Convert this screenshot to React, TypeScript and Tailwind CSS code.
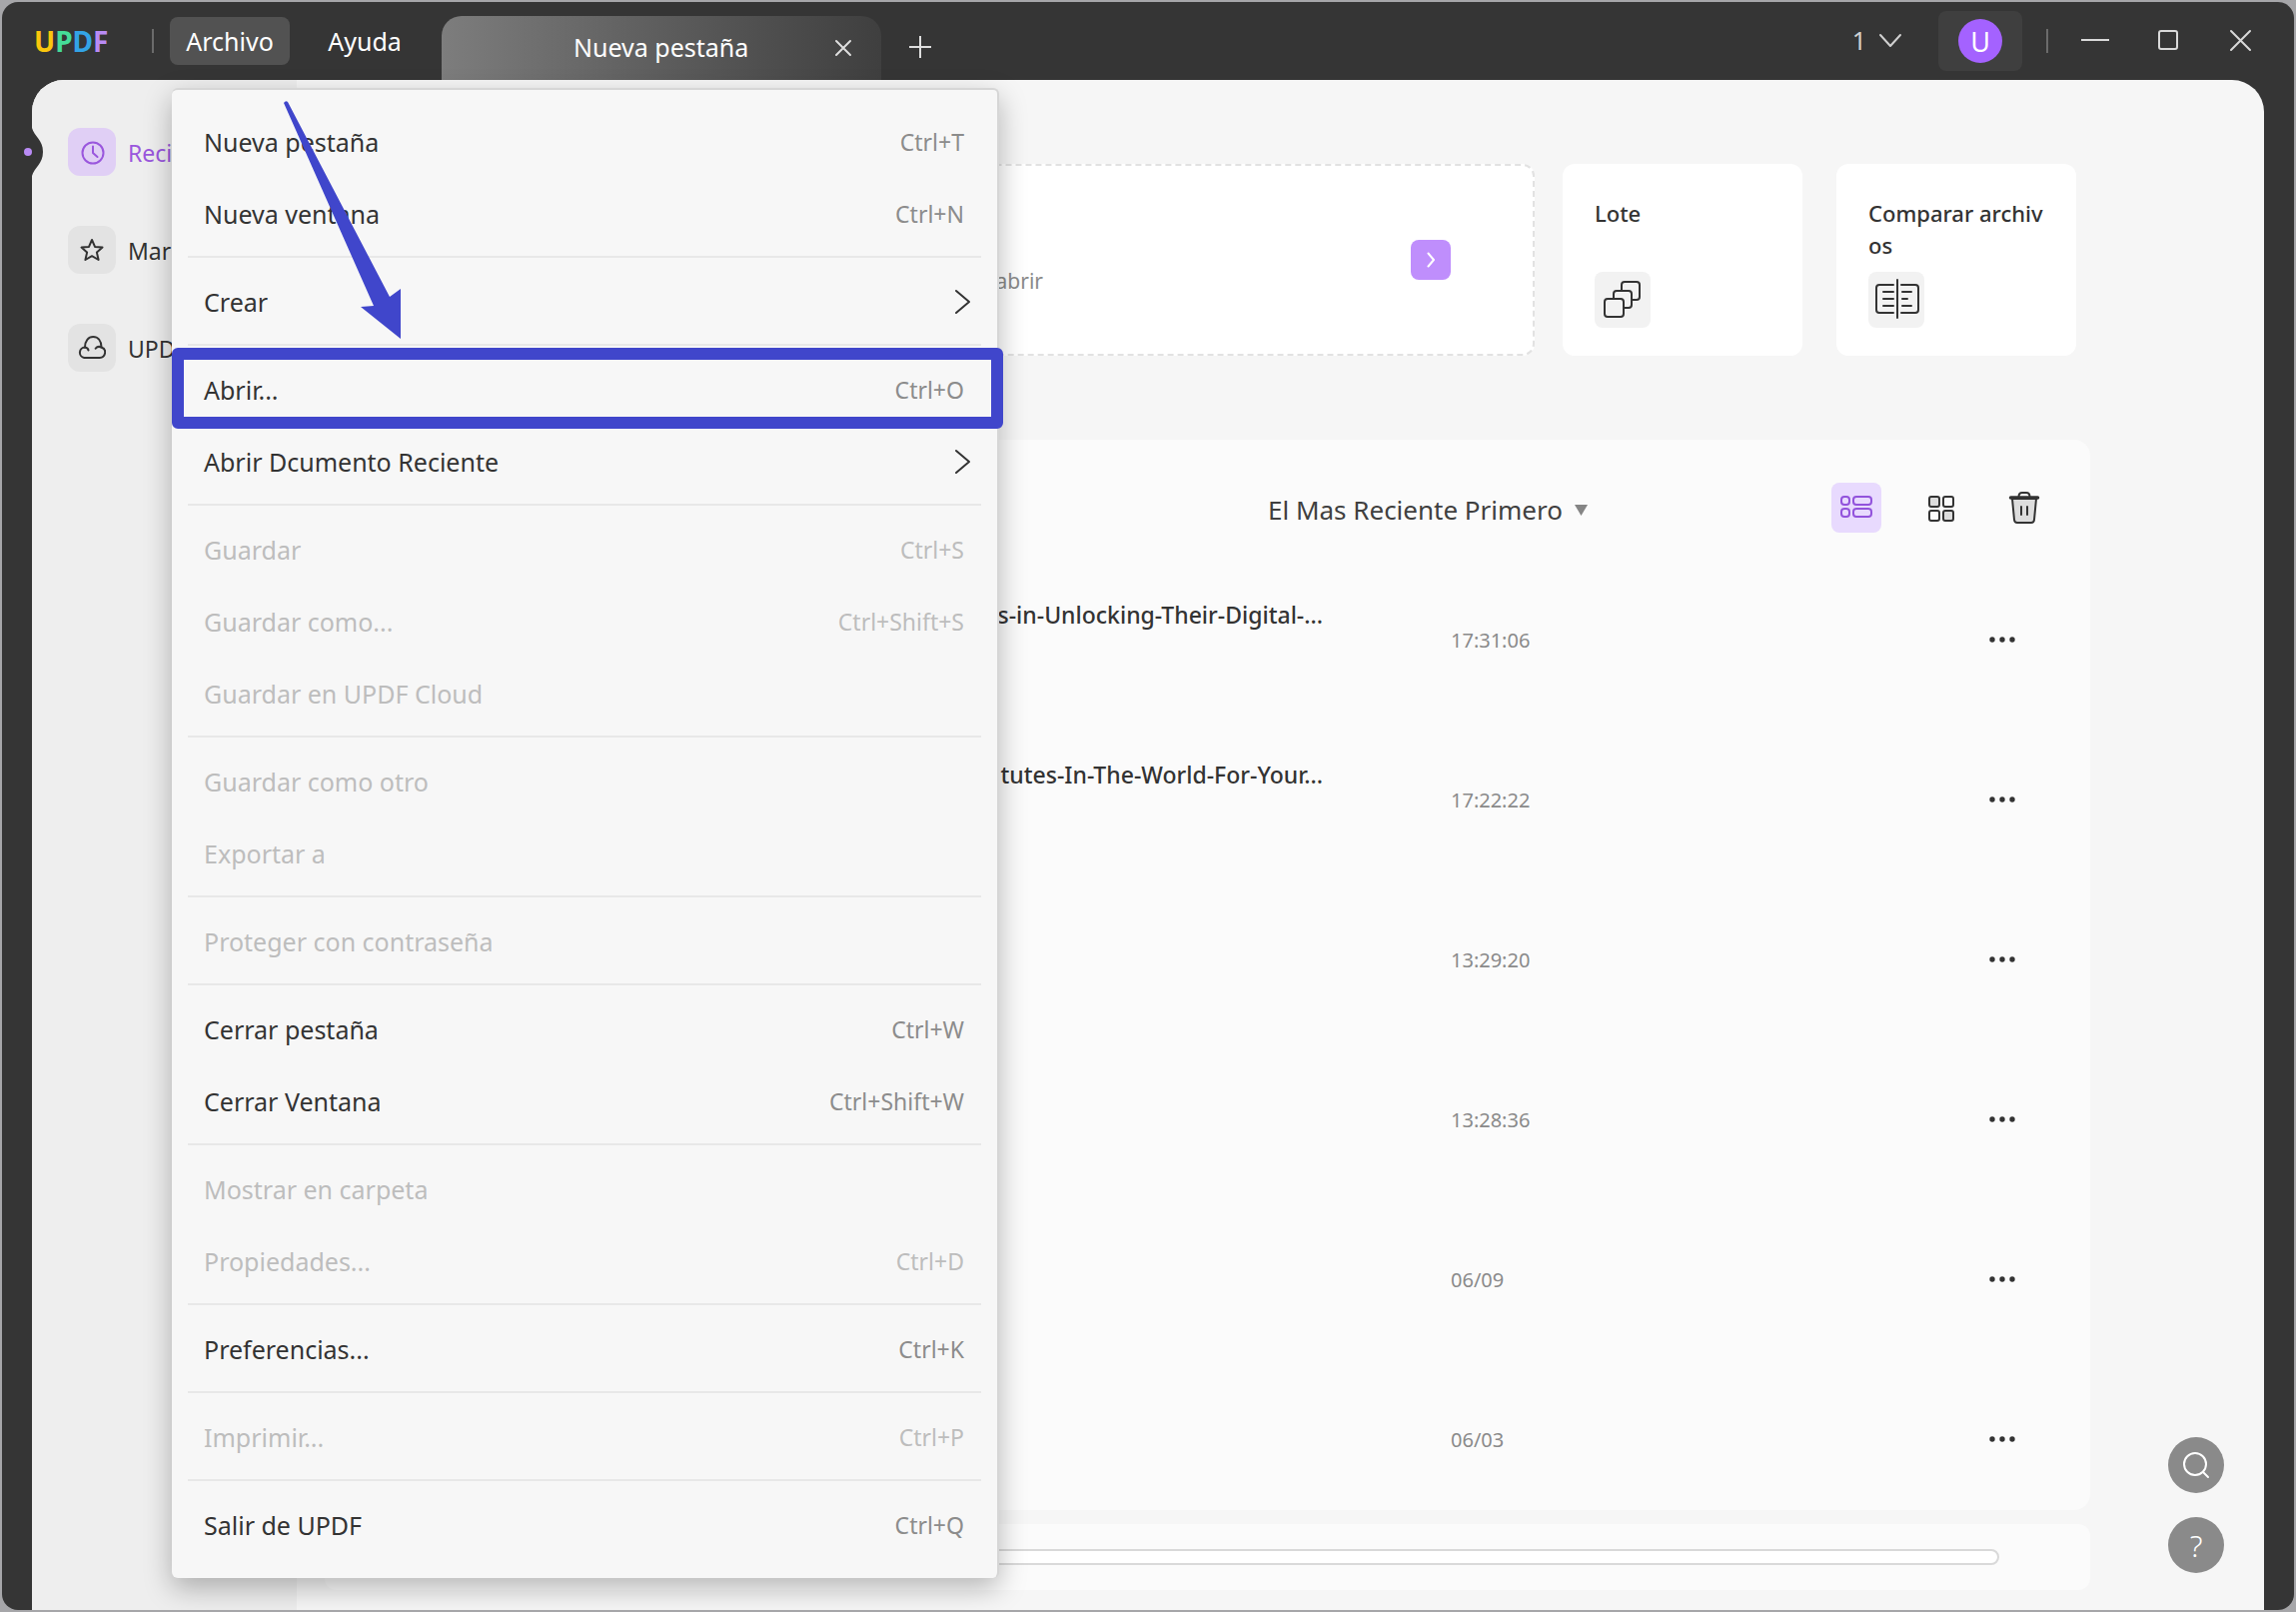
import { ReactNode } from "react";

interface MenuEntry {
  label: string;
  shortcut?: string;
  submenu?: boolean;
  disabled?: boolean;
  highlighted?: boolean;
}

interface RecentFile {
  id: number;
  name: string;
  time: string;
}

const menuGroups: MenuEntry[][] = [
  [
    { label: "Nueva pestaña", shortcut: "Ctrl+T" },
    { label: "Nueva ventana", shortcut: "Ctrl+N" },
  ],
  [{ label: "Crear", submenu: true }],
  [
    { label: "Abrir...", shortcut: "Ctrl+O", highlighted: true },
    { label: "Abrir Dcumento Reciente", submenu: true },
  ],
  [
    { label: "Guardar", shortcut: "Ctrl+S", disabled: true },
    { label: "Guardar como...", shortcut: "Ctrl+Shift+S", disabled: true },
    { label: "Guardar en UPDF Cloud", disabled: true },
  ],
  [
    { label: "Guardar como otro", disabled: true },
    { label: "Exportar a", disabled: true },
  ],
  [{ label: "Proteger con contraseña", disabled: true }],
  [
    { label: "Cerrar pestaña", shortcut: "Ctrl+W" },
    { label: "Cerrar Ventana", shortcut: "Ctrl+Shift+W" },
  ],
  [
    { label: "Mostrar en carpeta", disabled: true },
    { label: "Propiedades...", shortcut: "Ctrl+D", disabled: true },
  ],
  [{ label: "Preferencias...", shortcut: "Ctrl+K" }],
  [{ label: "Imprimir...", shortcut: "Ctrl+P", disabled: true }],
  [{ label: "Salir de UPDF", shortcut: "Ctrl+Q" }],
];

const recentFiles: RecentFile[] = [
  { id: 1, name: "s-in-Unlocking-Their-Digital-...", time: "17:31:06" },
  { id: 2, name: "tutes-In-The-World-For-Your...", time: "17:22:22" },
  { id: 3, name: "", time: "13:29:20" },
  { id: 4, name: "", time: "13:28:36" },
  { id: 5, name: "", time: "06/09" },
  { id: 6, name: "", time: "06/03" },
];

function TitleBar() {
  return (
    <header className="flex h-[78px] items-center text-[25px] text-white">
      <div className="ml-8 flex w-[78px] text-[28px] leading-8 font-bold">
        <span className="text-[#fbc70d]">U</span>
        <span className="text-[#45dc98]">P</span>
        <span className="text-[#33a3e6]">D</span>
        <span className="text-[#b98bf5]">F</span>
      </div>
      <span className="ml-10 h-6 w-[2px] bg-[#6b6b6b]" />
      <button className="ml-4 h-12 w-[120px] rounded-lg bg-[#525252] pt-[2px]">Archivo</button>
      <button className="ml-[30px] h-12 w-[90px] pt-[2px]">Ayuda</button>
      <div className="ml-8 flex h-16 w-[440px] items-center self-end rounded-t-[20px] bg-linear-to-r from-[#7d7d7d] to-[#3f3f3f]">
        <span className="flex-1 pl-[132px]">Nueva pestaña</span>
        <button aria-label="Cerrar pestaña" className="mr-7">
          <svg className="size-5" viewBox="0 0 20 20" fill="none" stroke="#dedede" strokeWidth="2" strokeLinecap="round">
            <path d="M3 3l14 14M17 3L3 17" />
          </svg>
        </button>
      </div>
      <button aria-label="Abrir pestaña" className="ml-7">
        <svg className="mt-3 size-6" viewBox="0 0 24 24" fill="none" stroke="#dedede" strokeWidth="2">
          <path d="M11 1v22M0 12h22" />
        </svg>
      </button>
      <button className="ml-auto flex items-center gap-3 text-[#d0d0d0]">
        1
        <svg className="size-6" viewBox="0 0 24 24" fill="none" stroke="currentColor" strokeWidth="2" strokeLinecap="round" strokeLinejoin="round">
          <path d="M2 6l10 11 10-11" />
        </svg>
      </button>
      <button className="ml-9 flex h-[60px] w-[84px] items-center justify-center rounded-lg bg-[#3f3f3f]">
        <span className="flex size-11 items-center justify-center rounded-full bg-[#a462ff] pt-[2px] text-[27px]">U</span>
      </button>
      <span className="ml-6 h-6 w-[2px] bg-[#6b6b6b]" />
      <div className="mr-[41px] ml-[33px] flex items-center gap-12 text-[#d9d9d9]">
        <button aria-label="Minimizar">
          <svg className="h-6 w-7" viewBox="0 0 28 24" stroke="currentColor" strokeWidth="2">
            <path d="M0 11h28" />
          </svg>
        </button>
        <button aria-label="Maximizar">
          <svg className="size-6" viewBox="0 0 24 24" fill="none" stroke="currentColor" strokeWidth="2">
            <rect x="2" y="2" width="18" height="18" rx="2" />
          </svg>
        </button>
        <button aria-label="Cerrar">
          <svg className="size-6" viewBox="0 0 24 24" fill="none" stroke="currentColor" strokeWidth="2" strokeLinecap="round">
            <path d="M2 2l19 19M21 2L2 21" />
          </svg>
        </button>
      </div>
    </header>
  );
}

function SidebarItem({ label, active, children }: { label: string; active?: boolean; children: ReactNode }) {
  return (
    <a href="#" className={`flex items-center gap-3 text-[23px] whitespace-nowrap ${active ? "text-[#9a57dd]" : "text-[#333333]"}`}>
      <span className={`flex size-12 shrink-0 items-center justify-center rounded-xl ${active ? "bg-[#e0cff5]" : "bg-[#e3e3e3]"}`}>
        <svg className="size-7" viewBox="0 0 28 28" fill="none" stroke="currentColor" strokeWidth="2" strokeLinecap="round" strokeLinejoin="round">
          {children}
        </svg>
      </span>
      <span className="pt-[2px]">{label}</span>
    </a>
  );
}

function Sidebar() {
  return (
    <nav className="relative w-[265px] shrink-0 overflow-hidden bg-[#eeeeee] pt-12 pl-9">
      {/* muesca de la sección activa */}
      <svg className="absolute top-12 left-0 h-12 w-[11px]" viewBox="0 0 11 48" fill="#353535">
        <path d="M0 0C2 8 11 12 11 24S2 40 0 48Z" />
      </svg>
      <div className="flex flex-col gap-[50px]">
        <SidebarItem label="Reci" active>
          <circle cx="15" cy="15" r="10.5" />
          <path d="M15 8.500v6.500l4.500 4" />
        </SidebarItem>
        <SidebarItem label="Mar">
          <path d="M14 4l3 6.900 7.500.7-5.600 5 1.700 7.400L14 20.200 7.400 24l1.700-7.400-5.600-5 7.500-.7z" />
        </SidebarItem>
        <SidebarItem label="UPD">
          <path d="M10.500 16.500c-.3-1.600-1.600-2.700-3.500-3a5.300 5.300 0 0 0-.8 10.500h15.500a5.400 5.400 0 0 0 1.800-10.500c-1.900-.9-4.300-.7-5.800 1.200" />
          <path d="M7 13.500C7 7 10.500 3 15.200 3s8.200 3.700 8.300 10.500" />
        </SidebarItem>
      </div>
    </nav>
  );
}

function ToolCard({ title, children }: { title: string; children: ReactNode }) {
  return (
    <article className="h-48 w-60 shrink-0 rounded-xl bg-white pt-[33px] pr-6 pl-8">
      <h2 className="h-[75px] text-[22px] leading-8 font-medium break-all text-[#333333]">{title}</h2>
      <button aria-label={title} className="flex size-14 items-center justify-center rounded-lg bg-[#f2f2f2]">
        <svg className="size-12" viewBox="0 0 48 48" fill="none" stroke="#333333" strokeWidth="2" strokeLinecap="round" strokeLinejoin="round">
          {children}
        </svg>
      </button>
    </article>
  );
}

function FileList() {
  return (
    <section className="flex-1 rounded-2xl bg-[#fbfbfb]">
      <div className="flex items-center justify-end pt-[43px] pr-[41px] pb-[15px]">
        <label className="mr-[244px] flex items-center gap-3 pt-1">
          <select aria-label="Ordenar" className="appearance-none bg-transparent text-[26px] text-[#404040]">
            <option>El Mas Reciente Primero</option>
          </select>
          <svg className="h-[11px] w-[13px]" viewBox="0 0 13 11" fill="#858585">
            <path d="M0 0h13L6.500 11z" />
          </svg>
        </label>
        <div className="flex gap-[34px]">
          <button aria-label="Vista de lista" className="flex size-[50px] items-center justify-center rounded-lg bg-[#e8dafe]">
            <svg className="h-6 w-8" viewBox="0 0 32 24" fill="none" stroke="#9253dc" strokeWidth="2">
              <rect x="1" y="1" width="8" height="8" rx="3" />
              <rect x="13" y="1" width="18" height="8" rx="3" />
              <rect x="1" y="13" width="8" height="8" rx="3" />
              <rect x="13" y="13" width="18" height="8" rx="3" />
            </svg>
          </button>
          <button aria-label="Vista de cuadrícula" className="flex size-[50px] items-center justify-center">
            <svg className="size-7" viewBox="0 0 28 28" fill="none" stroke="#333333" strokeWidth="2">
              <rect x="3" y="3" width="10" height="10" rx="2" fill="#dddddd" />
              <rect x="17" y="3" width="10" height="10" rx="2" />
              <rect x="3" y="17" width="10" height="10" rx="2" />
              <rect x="17" y="17" width="10" height="10" rx="2" fill="#dddddd" />
            </svg>
          </button>
          <button aria-label="Eliminar" className="flex size-[50px] items-center justify-center">
            <svg className="size-8" viewBox="0 0 32 32" fill="none" stroke="#333333" strokeWidth="2" strokeLinecap="round" strokeLinejoin="round">
              <path d="M4 7l2 21q.3 3 3 3h14q2.700 0 3-3l2-21z" fill="#dddddd" />
              <path d="M10.500 5q0-4 3.500-4h4q3.500 0 3.500 4M13 15v8M19 15v8" />
              <path d="M2.500 6h27" strokeWidth="3.500" />
            </svg>
          </button>
        </div>
      </div>
      <table className="w-full table-fixed">
        <tbody>
          {recentFiles.map((file) => (
            <tr key={file.id} className="h-40">
              <td className="overflow-hidden pr-32 pb-[26px] text-right text-[23px] font-medium whitespace-nowrap text-[#333333]">{file.name}</td>
              <td className="w-[522px] pt-[26px] text-[20px] text-[#8a8a8a]">{file.time}</td>
              <td className="w-[118px] pt-6 pl-[17px]">
                <button aria-label="Más opciones" className="flex h-8 items-center">
                  <svg className="h-2 w-[26px]" viewBox="0 0 26 8" fill="#333333">
                    <circle cx="3" cy="4" r="2.700" />
                    <circle cx="13" cy="4" r="2.700" />
                    <circle cx="23" cy="4" r="2.700" />
                  </svg>
                </button>
              </td>
            </tr>
          ))}
        </tbody>
      </table>
    </section>
  );
}

function MenuItem({ entry }: { entry: MenuEntry }) {
  return (
    <li role="none" className="relative">
      <button
        role="menuitem"
        disabled={entry.disabled}
        className={`flex h-[72px] w-full items-center justify-between pr-[33px] pl-8 text-[25px] ${entry.disabled ? "text-[#bdbdbd]" : "text-[#333333]"}`}
      >
        <span>{entry.label}</span>
        {entry.shortcut && <span className={`pb-[2px] text-[23px] ${entry.disabled ? "text-[#bdbdbd]" : "text-[#8c8c8c]"}`}>{entry.shortcut}</span>}
        {entry.submenu && (
          <svg className="-mr-2 h-7 w-5" viewBox="0 0 20 28" fill="none" stroke="#333333" strokeWidth="2" strokeLinecap="round" strokeLinejoin="round">
            <path d="M4 2l13 11L4 24" />
          </svg>
        )}
      </button>
      {entry.highlighted && (
        <span className="pointer-events-none absolute -top-[7px] -right-[6px] -bottom-[2px] left-0 rounded-md border-12 border-[#4046cb]" />
      )}
    </li>
  );
}

function FileMenu() {
  return (
    <div
      role="menu"
      aria-label="Archivo"
      className="absolute top-[86px] left-[170px] w-[828px] rounded-md border-t-2 border-r-2 border-[#d6d6d6] bg-[#f7f7f7] pt-[17px] pb-4 shadow-[0_10px_28px_rgba(0,0,0,0.28)]"
    >
      {menuGroups.map((group, index) => (
        <ul key={index} role="group">
          {index > 0 && (
            <li role="separator" className="flex h-4 items-center px-4 pb-1">
              <span className="h-[2px] w-full bg-[#e8e8e8]" />
            </li>
          )}
          {group.map((entry) => (
            <MenuItem key={entry.label} entry={entry} />
          ))}
        </ul>
      ))}
      <svg className="pointer-events-none absolute top-[10px] left-[110px] h-60 w-[122px]" viewBox="0 0 122 240" fill="#4046cb">
        <path d="M2 3q2-3 4-1L108 197l11-8v50L79 207l13-1z" />
      </svg>
    </div>
  );
}

export default function App() {
  return (
    <div className="flex min-h-screen bg-[#a6a6a9] p-[2px] font-['Noto_Sans','Open_Sans',sans-serif]">
      <div className="relative flex flex-1 flex-col overflow-hidden rounded-2xl bg-[#353535]">
        <TitleBar />
        <span className="absolute top-[146px] left-[22px] size-2 rounded-full bg-[#b98bf5]" />
        <div className="mx-[30px] flex flex-1 overflow-hidden rounded-t-[32px] bg-[#f6f6f6]">
          <Sidebar />
          <main className="flex min-w-0 flex-1 flex-col pt-[84px] pr-[174px] pb-5 pl-7">
            <div className="mr-[14px] mb-[84px] flex">
              <div className="mr-7 flex h-48 flex-1 items-center justify-between rounded-xl border-2 border-dashed border-[#e2e2e2] bg-white pr-[82px] pl-[508px]">
                <p className="flex-1 pt-11 text-[21px] text-[#8a8a8a]">
                  <span className="block w-[209px] text-right">abrir</span>
                </p>
                <button aria-label="Abrir archivo" className="flex size-10 items-center justify-center rounded-lg bg-[#bf8efc]">
                  <svg className="size-5" viewBox="0 0 20 20" fill="none" stroke="white" strokeWidth="2" strokeLinecap="round" strokeLinejoin="round">
                    <path d="M7.500 3.500l5.500 6.500-5.500 6.500" />
                  </svg>
                </button>
              </div>
              <div className="flex gap-[34px]">
                <ToolCard title="Lote">
                  <path d="M23 14V9a3 3 0 0 1 3-3h12a3 3 0 0 1 3 3v12a3 3 0 0 1-3 3h-4" />
                  <path d="M15 22v-4a3 3 0 0 1 3-3h12a3 3 0 0 1 3 3v11a3 3 0 0 1-3 3h-4" />
                  <rect x="6" y="23" width="19" height="18" rx="3" />
                </ToolCard>
                <ToolCard title="Comparar archivos">
                  <path d="M25 4v38M21 9H7a3 3 0 0 0-3 3v22a3 3 0 0 0 3 3h14M29 9h14a3 3 0 0 1 3 3v22a3 3 0 0 1-3 3H29" />
                  <path d="M11 16h10M11 23h10M11 30h10M30 16h9M30 23h5M30 30h9" />
                </ToolCard>
              </div>
            </div>
            <FileList />
            <div className="mt-[14px] rounded-xl bg-[#fbfbfb] py-[25px] pr-[91px] pl-12">
              <div role="progressbar" aria-label="Almacenamiento" aria-valuenow={0} className="h-4 rounded-full border-2 border-[#d9d9d9] bg-white" />
            </div>
          </main>
        </div>
        <div className="absolute right-[70px] bottom-[37px] flex flex-col gap-6">
          <button aria-label="Buscar" className="flex size-14 items-center justify-center rounded-full bg-[#8a8a8a]">
            <svg className="size-8" viewBox="0 0 32 32" fill="none" stroke="white" strokeWidth="2" strokeLinecap="round">
              <circle cx="15" cy="15" r="11" />
              <path d="M23 23l5 5" />
            </svg>
          </button>
          <button aria-label="Ayuda" className="size-14 rounded-full bg-[#8a8a8a] text-[30px] font-light text-white">
            ?
          </button>
        </div>
        <FileMenu />
      </div>
    </div>
  );
}
